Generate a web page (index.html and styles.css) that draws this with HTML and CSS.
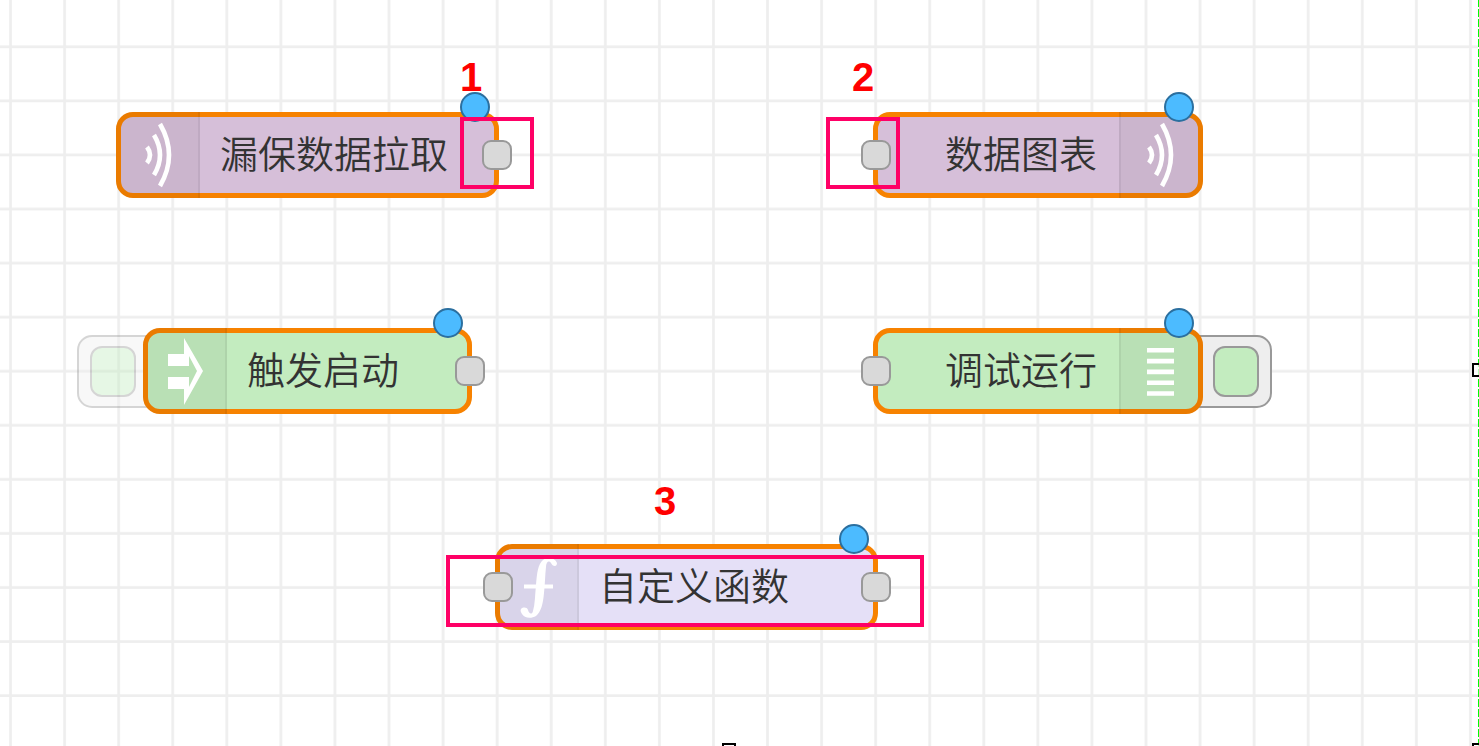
FILE: index.html
```html
<!DOCTYPE html>
<html lang="zh-CN">
<head>
<meta charset="utf-8">
<title>流程编辑器</title>
<link rel="stylesheet" href="styles.css">
</head>
<body>
<main class="canvas">
  <svg class="grid" aria-hidden="true">
    <defs>
      <pattern id="cell" width="20" height="20" patternUnits="userSpaceOnUse" patternTransform="translate(-16.5 -34.4) scale(2.7035)">
        <path d="M10 0V20M0 10H20" stroke="#eee" stroke-width="1" fill="none"/>
      </pattern>
    </defs>
    <rect width="100%" height="100%" fill="url(#cell)"/>
  </svg>

  <section class="node mqtt-in">
    <span class="icon">
      <svg viewBox="0 0 82 86"><path class="wave" d="M31 35Q37 43 31 51M38 23Q50 43 38 63M44 12Q62 43 44 74"/></svg>
    </span>
    <span class="label">漏保数据拉取</span>
    <span class="changed"></span>
    <span class="port out"></span>
  </section>

  <section class="node chart">
    <span class="label">数据图表</span>
    <span class="icon end">
      <svg viewBox="3 0 82 86"><path class="wave" d="M31 35Q37 43 31 51M38 23Q50 43 38 63M44 12Q62 43 44 74"/></svg>
    </span>
    <span class="changed"></span>
    <span class="port in"></span>
  </section>

  <button class="action before" type="button" aria-label="触发" disabled><span class="action-face"></span></button>
  <section class="node inject">
    <span class="icon">
      <svg viewBox="0 0 82 86"><path fill="#fff" fill-rule="evenodd" d="M25 26H41V10L60 43L41 77V61H25V49H46V59L54 43L46 28V38H25Z"/></svg>
    </span>
    <span class="label">触发启动</span>
    <span class="changed"></span>
    <span class="port out"></span>
  </section>

  <button class="action after" type="button" aria-label="调试"><span class="action-face"></span></button>
  <section class="node debug">
    <span class="label">调试运行</span>
    <span class="icon end">
      <svg viewBox="0 0 82 86"><path stroke="#fff" stroke-width="4.6" d="M26 22.3H53M26 33.1H53M26 43.9H53M26 54.7H53M26 65.5H53"/></svg>
    </span>
    <span class="changed"></span>
    <span class="port in"></span>
  </section>

  <section class="node function">
    <span class="icon">
      <svg viewBox="0 0 82 86"><path fill="#fff" d="M26 65C28 63 32 63 33 66C34 70 37 71 38 67C40 60 40 51 41 41C42 29 43 20 48 16C53 12 60 14 62 19C62 21 61 22 60 22C58 22 57 21 56 19C54 16 51 18 51 23C50 32 50 40 49 49C48 60 46 68 41 72C36 75 29 74 27 70C26 68 25 67 26 65Z"/><path d="M29 42.500H58" stroke="#fff" stroke-width="4"/></svg>
    </span>
    <span class="label">自定义函数</span>
    <span class="changed"></span>
    <span class="port in"></span>
    <span class="port out"></span>
  </section>

  <span class="mark mark-1"></span>
  <span class="mark mark-2"></span>
  <span class="mark mark-3"></span>
  <strong class="number number-1">1</strong>
  <strong class="number number-2">2</strong>
  <strong class="number number-3">3</strong>

  <span class="edge"></span>
  <span class="handle handle-right"></span>
  <span class="handle handle-bottom"></span>
  <span class="handle handle-corner"></span>
</main>
</body>
</html>
```
FILE: styles.css
```css
* { box-sizing: border-box; }

body { margin: 0; }

.canvas {
  position: relative;
  height: 100vh;
  overflow: hidden;
  background: #fff;
}

.grid {
  position: absolute;
  inset: 0;
  width: 100%;
  height: 100%;
}

/* Nodes */
.node {
  position: absolute;
  display: flex;
  height: 86px;
  border: 5px solid #f78200;
  border-radius: 17px;
  color: #333;
  font: 350 38px/1 "Noto Sans CJK SC DemiLight", "Noto Sans CJK SC", sans-serif;
}

.mqtt-in { left: 116px; top: 112px; background: #d6bfd9; }
.chart { left: 873px; top: 112px; background: #d6bfd9; }
.inject { left: 143px; top: 328px; background: #c3ecbf; }
.debug { left: 873px; top: 328px; background: #c3ecbf; }
.function { left: 495px; top: 544px; background: #e5e0f7; }

.icon {
  width: 84px;
  margin: -5px 0 -5px -5px;
  border-right: 2px solid rgba(0, 0, 0, 0.06);
  border-radius: 17px 0 0 17px;
  background: rgba(0, 0, 0, 0.05);
}

.icon.end {
  margin: -5px -5px -5px 0;
  border-right: 0;
  border-left: 2px solid rgba(0, 0, 0, 0.06);
  border-radius: 0 17px 17px 0;
}

.icon svg {
  display: block;
  width: 82px;
  height: 86px;
}

.wave {
  fill: none;
  stroke: #fff;
  stroke-width: 4.6;
}

.label {
  align-self: center;
  padding: 0 46px 6px 20px;
  white-space: nowrap;
}

.chart .label,
.debug .label { padding: 0 22px 6px 67px; }

.inject .label { padding-right: 68px; }

.function .label { padding-right: 84px; }

.changed {
  position: absolute;
  top: -25px;
  right: 4px;
  width: 30px;
  height: 30px;
  border: 2px solid #2b6f9f;
  border-radius: 50%;
  background: #4cbbff;
}

.port {
  position: absolute;
  top: 23px;
  width: 30px;
  height: 30px;
  border: 2px solid #999;
  border-radius: 9px;
  background: #d9d9d9;
}

.port.in { left: -17px; }
.port.out { right: -18px; }

/* Node buttons */
.action {
  position: absolute;
  top: 335px;
  width: 87px;
  height: 73px;
  padding: 9px 11px;
  border: 2px solid #999;
  border-radius: 15px;
  background: #eee;
}

.action.before { left: 77px; opacity: 0.4; }
.action.after { left: 1185px; }

.action-face {
  display: block;
  width: 46px;
  height: 51px;
  border: 2px solid #999;
  border-radius: 12px;
  background: #c3ecbf;
}

.after .action-face { margin-left: auto; }

/* Annotations */
.mark {
  position: absolute;
  width: 74px;
  height: 72px;
  border: 4px solid #ff0066;
}

.mark-1 { left: 460px; top: 117px; }
.mark-2 { left: 826px; top: 117px; }
.mark-3 { left: 446px; top: 555px; width: 478px; }

.number {
  position: absolute;
  color: #f00;
  font: bold 40px/46px "Liberation Sans", sans-serif;
}

.number-1 { left: 460px; top: 54px; }
.number-2 { left: 852px; top: 54px; }
.number-3 { left: 654px; top: 478px; }

/* Canvas resize frame */
.edge {
  position: absolute;
  top: 0;
  right: 0;
  bottom: 0;
  width: 1px;
  background: repeating-linear-gradient(#0f0 0 7px, #fff 7px 9px, #0f0 9px 10px);
}

.handle {
  position: absolute;
  width: 14px;
  height: 14px;
  border: 2px solid #000;
  background: rgba(255, 255, 255, 0.7);
}

.handle-right { right: -7px; top: 363px; }
.handle-bottom { left: 722px; bottom: -11px; }
.handle-corner { right: -7px; bottom: -11px; }
```
